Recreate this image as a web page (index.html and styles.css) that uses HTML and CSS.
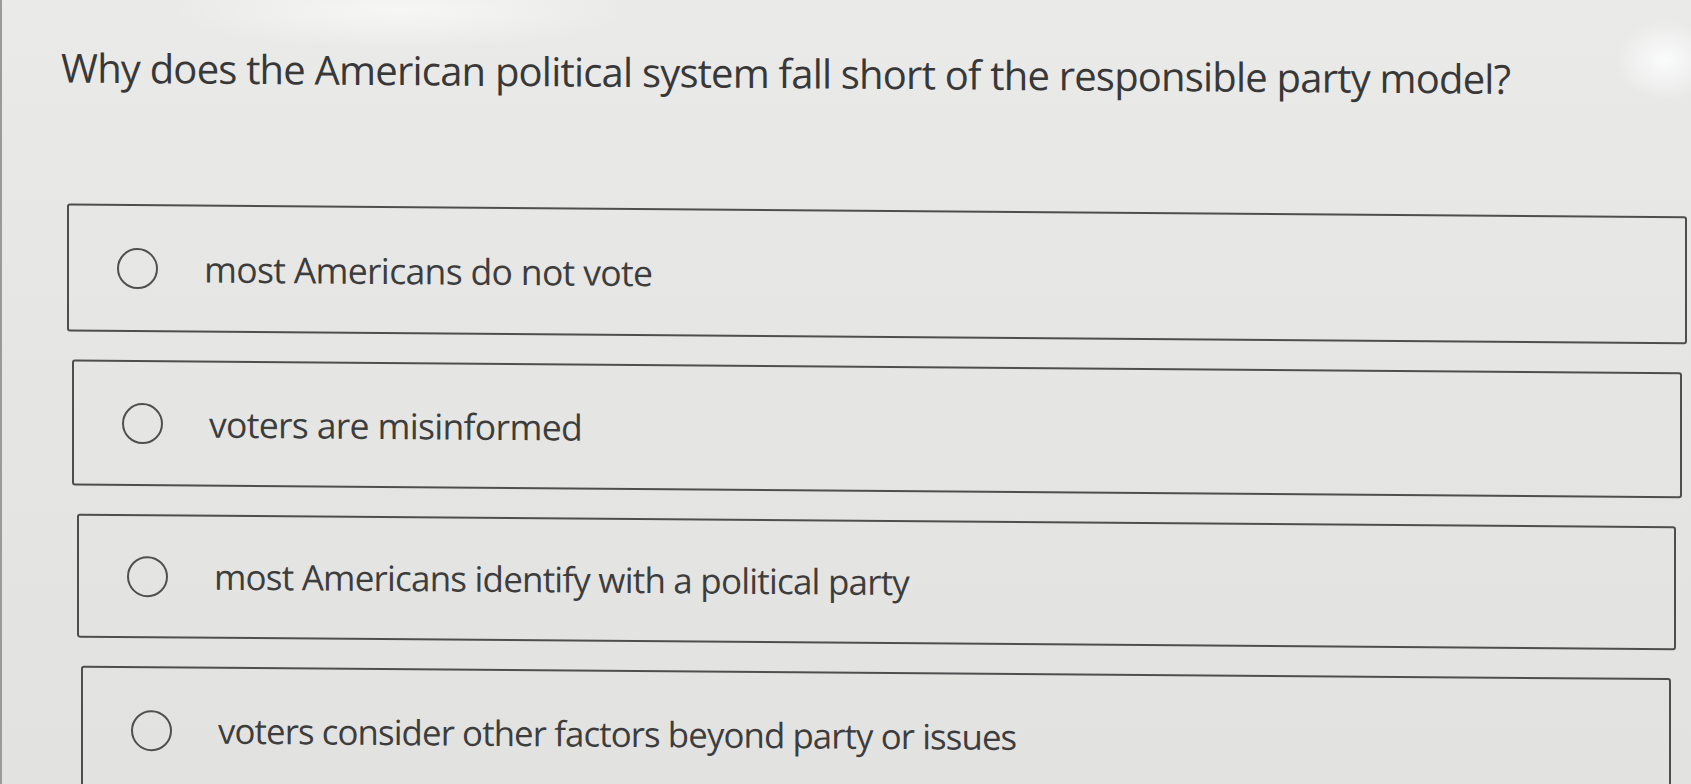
FILE: index.html
```html
<!DOCTYPE html>
<html lang="en">
<head>
<meta charset="utf-8">
<title>Question</title>
<link rel="stylesheet" href="styles.css">
</head>
<body>
<div class="page">
  <h1 class="question">Why does the American political system fall short of the responsible party model?</h1>
  <div class="options">
    <label class="option opt-1"><span class="radio"></span><span class="label">most Americans do not vote</span></label>
    <label class="option opt-2"><span class="radio"></span><span class="label">voters are misinformed</span></label>
    <label class="option opt-3"><span class="radio"></span><span class="label">most Americans identify with a political party</span></label>
    <label class="option opt-4"><span class="radio"></span><span class="label">voters consider other factors beyond party or issues</span></label>
  </div>
</div>
</body>
</html>
```
FILE: styles.css
```css
html, body {
  margin: 0;
  padding: 0;
  height: 100%;
  overflow: hidden;
}
body {
  background:
    radial-gradient(ellipse 230px 40px at 400px 10px, rgba(250, 250, 248, 0.8), rgba(250, 250, 248, 0) 100%),
    radial-gradient(ellipse 50px 40px at 1665px 60px, rgba(252, 253, 253, 0.9), rgba(252, 253, 253, 0) 100%),
    linear-gradient(180deg, #eaeae9 0%, #e6e6e5 40%, #e2e2e1 100%);
  border-left: 2px solid #9a9a9a;
  box-sizing: border-box;
  font-family: "Open Sans", "Liberation Sans", sans-serif;
  color: #3b3b3b;
}
.page {
  transform: skewY(0.45deg);
  transform-origin: 0 0;
  margin-left: -2px;
}
.question {
  margin: 0;
  padding: 37px 0 0 61px;
  font-size: 40px;
  font-weight: 400;
  line-height: 60px;
  letter-spacing: -0.8px;
  white-space: nowrap;
  color: #383838;
}
.options {
  display: flex;
  flex-direction: column;
  gap: 28px;
  margin-top: 106px;
}
.option {
  box-sizing: border-box;
  height: 128px;
  border: 2px solid #4e4e4e;
  border-radius: 3px;
  display: flex;
  align-items: center;
  padding-left: 48px;
  gap: 46px;
}
.opt-1 { margin: 0 4px 0 67px; }
.opt-2 { margin: 0 9px 0 72px; height: 126px; }
.opt-3 { margin: 0 15px 0 77px; height: 124px; }
.opt-4 { margin: 0 20px 0 81px; }
.radio {
  flex: none;
  box-sizing: border-box;
  width: 41px;
  height: 41px;
  border: 2px solid #505050;
  border-radius: 50%;
}
.label {
  font-size: 35.6px;
  line-height: 48px;
  letter-spacing: -0.7px;
  color: #3d3d3d;
}
.opt-3 .label { font-size: 35px; letter-spacing: -0.8px; }
.opt-4 .label { font-size: 34.8px; letter-spacing: -0.9px; }
```
